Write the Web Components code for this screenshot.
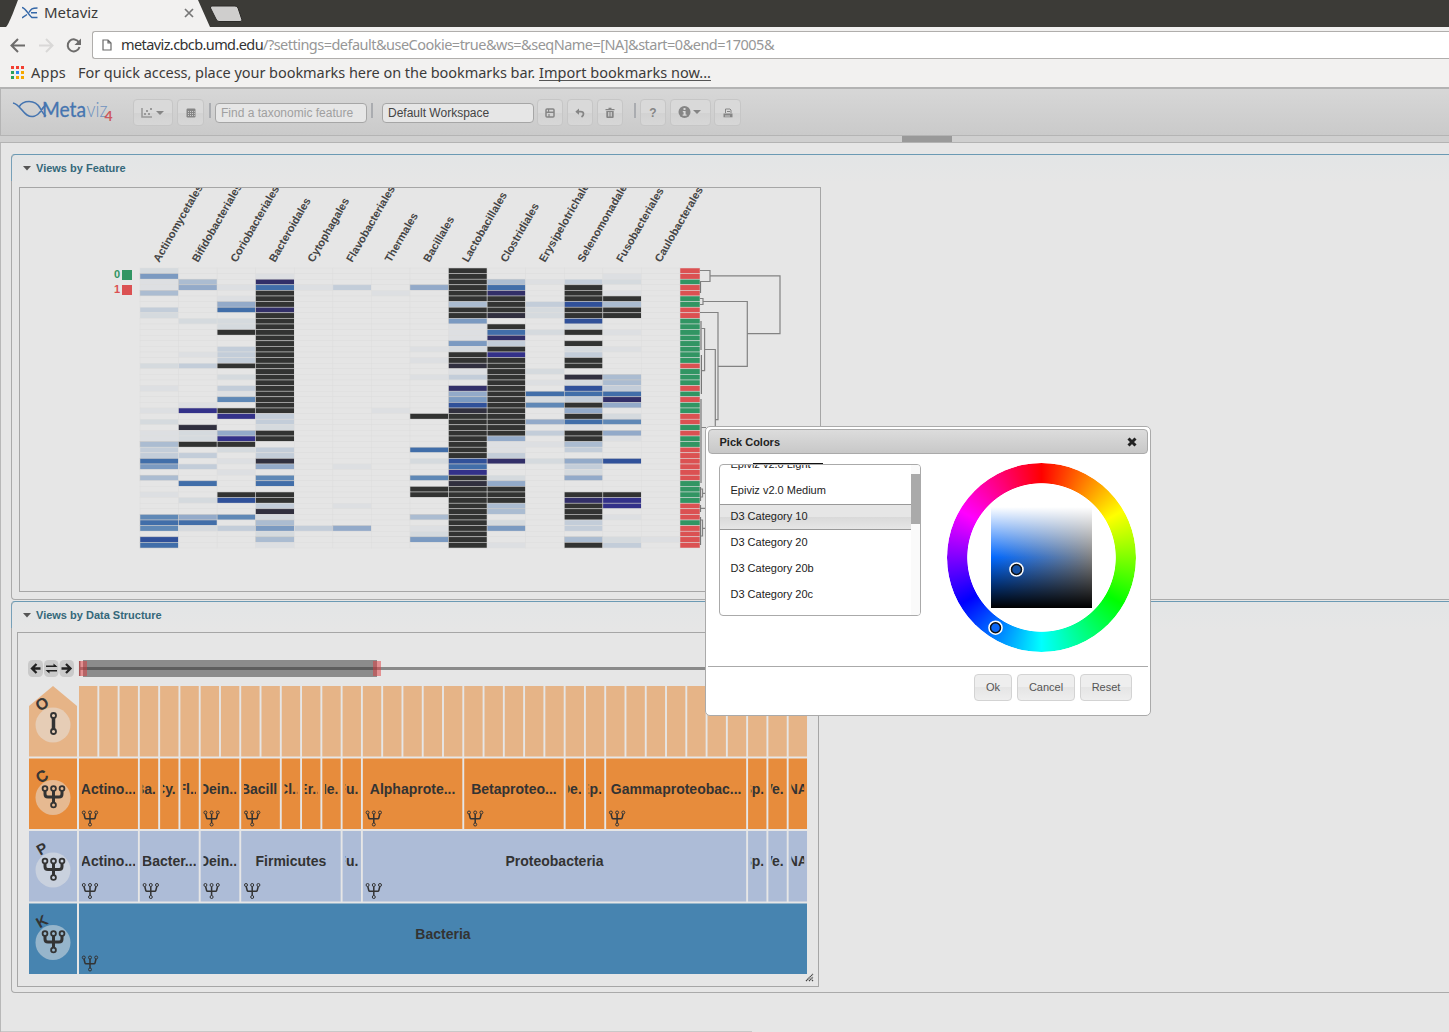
<!DOCTYPE html>
<html lang="en">
<head>
<meta charset="utf-8">
<title>Metaviz</title>
<style>
html,body{margin:0;height:100%}
body{font-family:"Liberation Sans",Arial,sans-serif;background:#e6e6e6;overflow:hidden;width:1449px;height:1032px}
</style>
</head>
<body>
<mv-page></mv-page>
<script>
const define=(name,html,ready)=>customElements.define(name,class extends HTMLElement{
  connectedCallback(){
    if(this.shadowRoot)return;
    const t=document.createElement('template');
    t.innerHTML=typeof html==='function'?html(this):html;
    this.attachShadow({mode:'open'}).append(t.content.cloneNode(true));
    if(ready)ready(this);
  }
});

/* Line of text stretched to a given advance width */
define('mv-fit','<style>:host{display:inline-block;white-space:pre}span{display:inline-block}</style><span><slot></slot></span>',el=>{
  const s=el.shadowRoot.querySelector('span'),n=el.textContent.length,w=+el.getAttribute('w');
  s.style.letterSpacing=((w-s.getBoundingClientRect().width)/n)+'px';
});

define('mv-browser',`<style>
:host{display:block;height:87px;background:#f2f1f0;font:15px "Noto Sans","Open Sans",sans-serif;color:#3c3b3a}
.tabs{height:27px;background:#3c3b37;position:relative}
.tabs>svg{display:block;position:absolute;left:0;top:0}
.tabrow{position:relative;display:flex;align-items:center;height:26px;padding-left:22px}
.tabrow .name{margin-left:6px;width:140px;padding-bottom:2px}
.nav{display:flex;align-items:center;height:35px}
.nav svg{flex:none}
.url{margin-left:10px;flex:1;height:26px;border:1px solid #b0aeac;border-right:0;border-radius:3px 0 0 3px;background:#fff;display:flex;align-items:center;font-size:14.5px;color:#333}
.url svg{margin:0 9px 0 9px}
.url mv-fit{margin-bottom:2px}
.url i{font-style:normal;color:#979797}
.marks{display:flex;align-items:center;height:21px;padding-left:11px;font-size:14.5px}
.marks svg{margin-right:7px}
.marks mv-fit{margin-bottom:2px}
.marks .m{margin-left:12px}
u{text-decoration:none;border-bottom:1px solid #555;line-height:16px;margin-left:4px;display:inline-block}
.marks u mv-fit{margin-bottom:0}
</style>
<div class="tabs"><svg width="260" height="27"><path d="M6 27C9 25 16 5 18 0H198L210 27Z" fill="#f2f1f0"/><path d="M212 6H235Q237 6 238 8L242 20Q242 21.500 240 21.500H219Q217 21.500 216 19L210.500 8Q210 6 212 6Z" fill="#cfcecd" stroke="#2c2b28"/></svg>
<div class="tabrow"><svg width="16" height="14" fill="none" stroke="#3568a8" stroke-width="1.500"><path d="M0 1.500C4 2 7 10 10 11.500H15.500M0 12L5 8.500M7 6.500C9 3 10 2 15.500 2M9 6.700H15"/></svg><span class="name"><mv-fit w="54">Metaviz</mv-fit></span><svg width="10" height="10" stroke="#777" stroke-width="1.700"><path d="M1 1L9 9M9 1L1 9"/></svg></div></div>
<div class="nav"><svg width="82" height="34" fill="none" stroke="#6d6c6b" stroke-width="2"><path d="M25 17.500H12M18 11L11.500 17.500L18 24"/><path stroke="#d9d8d7" d="M39 17.500H52M46 11L52.500 17.500L46 24"/><path d="M79 14.500A6 6 0 1 0 79.500 19"/><path fill="#6d6c6b" stroke="none" d="M81 10.500V17H74.500Z"/></svg>
<div class="url"><svg width="10" height="12" fill="none" stroke="#6a6a6a" stroke-width="1.200"><path d="M1 1H6L9 4V11H1ZM6 1V4H9"/></svg><mv-fit w="142">metaviz.cbcb.umd.edu</mv-fit><i><mv-fit w="511">/?settings=default&amp;useCookie=true&amp;ws=&amp;seqName=[NA]&amp;start=0&amp;end=17005&amp;</mv-fit></i></div></div>
<div class="marks"><svg width="13" height="13"><g fill="#f33f30"><path d="M0 0h3v3H0zM5 0h3v3H5zM10 0h3v3h-3z"/></g><path fill="#2ca05a" d="M0 5h3v3H0zM0 10h3v3H0z"/><path fill="#2a86f0" d="M5 5h3v3H5z"/><path fill="#f5a800" d="M10 5h3v3h-3zM5 10h3v3H5zM10 10h3v3h-3z"/></svg><mv-fit w="35">Apps</mv-fit><span class="m"><mv-fit w="457">For quick access, place your bookmarks here on the bookmarks bar.</mv-fit></span><u><mv-fit w="172">Import bookmarks now...</mv-fit></u></div>`);

define('mv-button',`<style>
:host{display:flex;align-items:center;justify-content:center;box-sizing:border-box;height:27px;border:1px solid #c6c6c6;border-radius:4px;background:linear-gradient(#d9d9d9 50%,#d2d2d2 50%,#d7d7d7);color:#858585;font:bold 12px "Liberation Sans",sans-serif;flex:none}
:host([light]){height:27px;font:11px "Liberation Sans",sans-serif;color:#555;border-color:#d3d3d3;background:linear-gradient(#eeeeee 50%,#e5e5e5 50%,#eeeeee);padding-bottom:2px}
</style><slot></slot>`);

define('mv-toolbar',`<style>
:host{display:block;font:12px "Liberation Sans",sans-serif}
.bar{box-sizing:border-box;height:49px;border-top:2px solid #b3b3b3;border-bottom:1px solid #b4b4b4;border-left:1px solid #b4b4b4;background:linear-gradient(#d7d7d7,#cacaca);display:flex;align-items:flex-start;padding:10px 0 0 11px}
.logo{width:110px;height:30px;margin-right:11px;flex:none;font-family:Lato,sans-serif}
.sep{width:2px;height:15px;background:#aaacb0;margin:4px 0 0 -1px;flex:none}
.in{box-sizing:border-box;width:152px;height:20px;border:1px solid #a6a6a6;border-radius:4px;background:#e6e6e6;padding:0 5px;line-height:18px;margin-top:4px;flex:none;color:#444;white-space:nowrap}
.ph{color:#a0a0a0}
.strip{box-sizing:border-box;height:7px;background:#cfcfcf;border-bottom:1px solid #b3b3b3;display:flex;padding-left:902px}
.strip b{width:50px;height:6px;background:#999}
</style>
<div class="bar">
<svg class="logo" width="110" height="30"><g fill="none" stroke="#4675b0" stroke-width="1.600"><path d="M1 4C7 5 10 13 15 16C20 19 25 17 28 13Q31 8 34 6M7 8C11 1 23 0 28 9Q31 15 34 17"/></g><text x="30" y="17.500" font-size="21" fill="#4675b0" stroke="#4675b0" stroke-width=".3" textLength="44" lengthAdjust="spacingAndGlyphs">Meta</text><text x="74.500" y="17.500" font-size="21" font-weight="300" fill="#6f93c0" textLength="21" lengthAdjust="spacingAndGlyphs">viz</text><text x="92.500" y="22" font-size="14" font-weight="bold" fill="#cc5a60">4</text></svg>
<mv-button style="width:40px"><svg width="24" height="12"><path d="M1 1V10H11" fill="none" stroke="#999" stroke-width="1.600"/><path fill="#999" d="M3 6h2v2H3zM5 3h2v2H5zM7 6h2v2H7zM9 1h2v2H9z"/><path fill="#858585" d="M15 4H23L19 8Z"/></svg></mv-button>
<mv-button style="width:27px;margin-left:4px"><svg width="10" height="10"><rect x=".5" y=".5" width="9" height="9" rx="1.200" fill="#858585"/><path fill="#cdcdcd" d="M2 3h1v1H2zM4 3h1v1H4zM6 3h1v1H6zM8 3h.7v1H8zM2 5h1v1H2zM4 5h1v1H4zM6 5h1v1H6zM8 5h.7v1H8zM2 7h1v1H2zM4 7h1v1H4zM6 7h1v1H6zM8 7h.7v1H8z"/></svg></mv-button>
<span class="sep" style="margin-left:5px"></span><div class="in ph" style="margin-left:4px">Find a taxonomic feature</div>
<span class="sep" style="margin-left:4px"></span><div class="in" style="margin-left:9px">Default Workspace</div>
<mv-button style="width:26px;margin-left:3px"><svg width="10" height="10"><rect x="1" y="1" width="8" height="8" rx="1" fill="none" stroke="#858585" stroke-width="1.500"/><path fill="#858585" d="M1 3.500H9V5H1zM3 1h1.200v3H3zM3.400 6h1.200v3H3.400z"/></svg></mv-button>
<mv-button style="width:26px;margin-left:4px"><svg width="10" height="10"><path fill="none" stroke="#858585" stroke-width="1.700" d="M3 3.700H5.500Q8.500 3.700 8.500 6Q8.500 7.500 6.500 9"/><path fill="#858585" d="M.3 3.700L4 .6V6.800Z"/></svg></mv-button>
<mv-button style="width:26px;margin-left:4px"><svg width="10" height="11"><path fill="#858585" d="M.5 2h9v1.200h-9zM3.500 .8h3V2h-3zM1.300 4h7.400v6q0 1-1 1H2.300q-1 0-1-1z"/><path stroke="#ccc" stroke-width=".9" d="M3.500 5V9.500M5 5V9.500M6.500 5V9.500"/></svg></mv-button>
<span class="sep" style="margin-left:11px"></span>
<mv-button style="width:26px;margin-left:4px">?</mv-button>
<mv-button style="width:41px;margin-left:4px"><svg width="24" height="13" style="margin-left:-1px"><circle cx="6.500" cy="6" r="6" fill="#858585"/><path fill="#d8d8d8" d="M5.500 2h2v2h-2zM4.800 5h2.800V8.500h1v1.200H4.600V8.500h1V6.200h-.8z"/><path fill="#858585" d="M15 4H23L19 8Z"/></svg></mv-button>
<mv-button style="width:27px;margin-left:3px"><svg width="10" height="10"><path fill="none" stroke="#858585" d="M2.500 5V1H7L8 2V5M4 3.500H7"/><path fill="#858585" d="M.5 5.500h9V9.300h-9z"/><path fill="#ccc" d="M2 7.500h5v1H2z"/></svg></mv-button>
</div><div class="strip"><b></b></div>`);

define('mv-panel',el=>`<style>
:host{display:block;box-sizing:border-box;border:1px solid #aaa;border-top-color:#6b9ab4;border-right:0;border-radius:4px 0 0 4px;background:linear-gradient(#e3e5e6,#e6e6e6 28px);background-size:100% 28px;background-repeat:no-repeat}
h3{margin:0 0 0 -1px;border-left:1px solid #77a0b8;height:26px;display:flex;align-items:center;font:bold 11px "Liberation Sans",sans-serif;color:#34687a;padding-left:10.5px;border-top-left-radius:4px}
svg{margin-right:5.500px}
</style><h3><svg width="8" height="5"><path d="M0 0H8L4 4.500Z" fill="#555"/></svg>${el.getAttribute('label')}</h3><slot></slot>`);

const COLORS={a:'#dddfe2',b:'#d5dade',c:'#c3cdd9',d:'#abbcd1',e:'#93aac9',f:'#7b9ac1',g:'#5f88b6',h:'#416ea9',i:'#30519a',j:'#333189',k:'#322f68',l:'#31303f',m:'#323332'};
const ROWS='0b8m,0f3a8mCa,0a1d3k8m9dAaBcCb,0a1e2a3h4a5c7e8m9hBm,0d3m6a8m9kBmCa,2a3m8m9mBmCm,2e3m8d9mAcBiCd,0c2h3k8m9mAbBmCm,0b3m8m9lAbBmCm,1b2b3m8fBi,2b3m8a9mBb,2m3m8a9hAbBmCa,3m8a9k,3m8f9cBm,2c3m7a8b9mBbCa,1a2c3m8m9jBc,2c3m7a8m9mBm,0b1c2m3m8l9mBm,3m8a9mAb,2b3m7a8c9mBlCd,3m9mAaBbCd,0a2c3m8k9mBiCc,2a3m8e9mAhBhCh,2g3m8f9mAbBcCk,1a3m8i9mAgBmCe,0a1j2m3m6a8l9mBe,2j3c7m8m9mBmCb,0b3c8m9mAeBhCg,1l3b8m9mBa,0a1b2e3m8m9mAcBmCe,0a1b2j3m8m9eBmCa,0d1m2m8m9aAaBd,0c2b3c7h8m9aBc,0c1c3c8m9c,0h2a3l7b8i9kAbBeCi,0f1c3e5a8hBc,2a8jBb,0d3g7g8m9bBe,1h3h8l9e,7m8m9m,0a2m3m7m8m9mBmCm,1b2i3m8m9mBkCj,3c5a8m9dBmCj,3l8m9dBm,0g1e2g3b7d8mBmCa,0h1h3d8m9bBc,0g1b2c3f4c5e7a8m9fBc,3b7b8m,0i3d7f8mBdCbDa,0h3a8m9aBmCc'.split(',');
const CLASS='RRGRRGGRRGGGGGGGGRGGGRGRGGRRGRGGRRRRRRGGGGRRRGRRRR';
const TAXA=['Actinomycetales','Bifidobacteriales','Coriobacteriales','Bacteroidales','Cytophagales','Flavobacteriales','Thermales','Bacillales','Lactobacillales','Clostridiales','Erysipelotrichales','Selenomonadales','Fusobacteriales','Caulobacterales'];

/* Heatmap with row classes and dendrogram; coordinates in page space via viewBox */
define('mv-heatmap',()=>{
  let s='';const W=540/14,H=5.6,X=140,Y=268;
  ROWS.forEach((r,i)=>{
    const m={};for(let k=0;k<r.length;k+=2)m[parseInt(r[k],16)]=r[k+1];
    for(let c=0;c<14;c++)s+=`<rect x="${(X+c*W).toFixed(2)}" y="${(Y+i*H).toFixed(2)}" width="${W.toFixed(2)}" height="5.6" fill="${COLORS[m[c]]||'#e5e5e5'}" stroke="${m[c]>'c'?'#c8c8c8':'#dedede'}" stroke-width=".55"/>`;
    s+=`<rect x="680" y="${(Y+i*H).toFixed(2)}" width="20" height="5.6" fill="${CLASS[i]=='R'?'#db5152':'#319563'}" stroke="#ddd" stroke-width=".5"/>`;
  });
  TAXA.forEach((t,i)=>{s+=`<text transform="translate(${(159.3+i*W).toFixed(1)} 263) rotate(-60)" font-size="11" font-weight="bold" fill="#444">${t}</text>`});
  return `<style>:host{display:block;box-sizing:border-box;width:802px;height:405px;border:1px solid #a6a6a6}svg{display:block;overflow:hidden}</style>
<svg width="800" height="403" viewBox="20 188 800 403" font-family="Liberation Sans,sans-serif">${s}
<g font-size="11" font-weight="bold"><text x="114" y="278" fill="#319563">0</text><text x="114" y="293" fill="#db5152">1</text></g><rect x="122" y="270" width="10" height="10" fill="#319563"/><rect x="122" y="285" width="10" height="10" fill="#db5152"/>
<path fill="none" stroke="#828282" stroke-width="1.200" d="M700 270.500H710V281.500H700M710 275.900H780V333.700H747.500M700 298.500H703V304.500H700M703 301.500H747.300V366.300H718M700 312.500H718V419.700H715.300M715.300 450V349.500H704.600M701.500 328.500H704.600V370.700H701.500M701.500 427.500H706M700 489H702.500V497H700M702.500 493.300H706M701 508.300H706M700 520H702.500V536H700M702.500 528.300H706"/>
<path fill="none" stroke="#777" stroke-width="1.200" d="M700.500 282V293M701 321V350M701.400 355V394M701 399V483M700.500 487V501M700.500 505V512M700.500 517V545"/></svg>`;
});

const fork=(x,y,big)=>big
 ?`<g transform="translate(${x} ${y})" fill="none" stroke="#333"><path stroke-width="3" d="M-8.500 2.500V5.500Q-8.500 8.500-5.500 8.500H5.500Q8.500 8.500 8.500 5.500V2.500M0 2.500V14"/><g stroke-width="1.800"><circle cx="-8.500" r="2.400"/><circle r="2.400"/><circle cx="8.500" r="2.400"/><circle cy="16.500" r="2.400"/></g></g>`
 :`<g transform="translate(${x} ${y})" fill="none" stroke="#333"><path stroke-width="1.500" d="M-6 1.500L-5 5.500Q-4.800 6.300-4 6.300H4Q4.800 6.300 5 5.500L6 1.500M0 1.500V10.500"/><g stroke-width="1"><circle cx="-6.200" r="1.500"/><circle r="1.500"/><circle cx="6.200" r="1.500"/><circle cy="12" r="1.500"/></g></g>`;
define('mv-icicle',()=>{
  const U=729.9/36,X=79;let s='',id=0;
  const rows=[
   {y:686,c:'#e6b487',k:'O',cells:Array(36).fill(['',1])},
   {y:758.5,c:'#e78c3c',k:'C',cells:[['Actino...',3,1],['Ba...',1],['Cy...',1],['Fl...',1],['Dein...',2,1],['Bacilli',2,1],['Cl...',1],['Er...',1],['Ne...',1],['Fu...',1],['Alphaprote...',5,1],['Betaproteo...',5,1],['De...',1],['Ep...',1],['Gammaproteobac...',7,1],['Sp...',1],['Ve...',1],['NA',1]]},
   {y:831,c:'#adbcd7',k:'P',cells:[['Actino...',3,1],['Bacter...',3,1],['Dein...',2,1],['Firmicutes',5,1],['Fu...',1],['Proteobacteria',19,1],['Sp...',1],['Ve...',1],['NA',1]]},
   {y:903.5,c:'#4784b0',k:'K',cells:[['Bacteria',36,1]]}];
  rows.forEach((r,ri)=>{
    s+=ri?`<rect x="29" y="${r.y}" width="48" height="70.500" fill="${r.c}"/>`:`<path d="M29 706L53 686L77 706V756.500H29Z" fill="${r.c}"/>`;
    s+=`<text transform="translate(${42} ${r.y+18}) rotate(-30)" text-anchor="middle" y="5" font-size="15" font-weight="${ri<2?'normal':'bold'}" stroke="#333" stroke-width="${ri<2?.8:0}" fill="#333">${r.k}</text><circle cx="53" cy="${r.y+39}" r="17.500" fill="#e6e6e6" opacity=".5"/>`;
    s+=ri?fork(53.5,r.y+30,true):`<g fill="none" stroke="#333"><path stroke-width="3.500" d="M53.500 717V730"/><circle cx="53.500" cy="715.500" r="2.500" stroke-width="1.800"/><circle cx="53.500" cy="731.500" r="2.500" stroke-width="1.800"/></g>`;
    let u=0;
    r.cells.forEach(([t,n,f])=>{
      const x=X+u*U,w=n*U-1.900;u+=n;
      s+=`<rect x="${x.toFixed(2)}" y="${r.y}" width="${w.toFixed(2)}" height="70.500" fill="${r.c}"/>`;
      if(t){id++;s+=`<clipPath id="c${id}"><rect x="${(x+2.8).toFixed(2)}" y="${r.y}" width="${(w-5.600).toFixed(2)}" height="70"/></clipPath><g clip-path="url(#c${id})"><text x="${(x+w/2).toFixed(2)}" y="${r.y+35.3}" text-anchor="middle" font-size="14" font-weight="bold" fill="#333">${t}</text></g>`}
      if(f)s+=fork(+(x+11).toFixed(1),r.y+54,false);
    });
  });
  return `<style>:host{display:block;box-sizing:border-box;width:802px;height:355px;border:1px solid #a6a6a6}svg{display:block}</style>
<svg width="800" height="353" viewBox="18 633 800 353" font-family="Liberation Sans,sans-serif">
<g fill="#cacaca"><rect x="28" y="660" width="15" height="17" rx="4.500"/><rect x="44" y="660" width="14.500" height="17" rx="4.500"/><rect x="59.500" y="660" width="14.500" height="17" rx="4.500"/></g>
<g fill="none" stroke="#222" stroke-width="2.300"><path d="M40.500 668.500H33M36.500 664L32 668.500L36.500 673M61.500 668.500H69M66 664L70.500 668.500L66 673"/><path stroke-width="1.500" d="M46 666.300H56M47 670.700H57"/></g><path fill="#222" d="M53.500 663.500L57.500 667H53.500ZM49.500 673.500L45.500 670H49.500Z"/>
<rect x="79" y="667" width="728" height="3" fill="#8a8a8a"/><rect x="83" y="660" width="294" height="17" fill="#8c8c8c"/><rect x="83" y="667" width="294" height="3" fill="#5e5e5e"/>
<g fill="#e03a3e" fill-opacity=".5"><rect x="79" y="661" width="8" height="15"/><rect x="373" y="661" width="8" height="15"/></g><path d="M79.700 661V676" stroke="#a55" stroke-width="1.500"/>
${s}<path stroke="#444" stroke-width="1.200" stroke-dasharray="1.400 .4" d="M806 981L813 974M809 981L813 977M812 981L813 980"/></svg>`;
});

define('mv-list',`<style>
:host{display:flex;box-sizing:border-box;width:202px;height:152px;border:1px solid #aaa;border-radius:4px;overflow:hidden;font:11px "Liberation Sans",sans-serif;color:#222}
.items{flex:1;margin-top:-13px}
.items div{box-sizing:border-box;height:26px;padding-left:10.5px;line-height:24px;border:solid transparent;border-width:0}
.items .sel{border:solid #999;border-width:1px 0;line-height:22px;background:linear-gradient(#e6e6e6 50%,#d9d9d9 50%,#e6e6e6)}
.track{width:9px;background:#fafafa;padding-top:9px}
.track i{display:block;height:50px;background:#aaa}
</style><div class="items"><div>Epiviz v2.0 Light</div><div>Epiviz v2.0 Medium</div><div class="sel">D3 Category 10</div><div>D3 Category 20</div><div>D3 Category 20b</div><div>D3 Category 20c</div></div><div class="track"><i></i></div>`);

define('mv-wheel',`<style>
:host{display:grid;place-items:center;width:189px;height:189px;position:relative}
.ring,.sq{grid-area:1/1}
.ring{width:189px;height:189px;border-radius:50%;background:conic-gradient(red,#ff0,#0f0,#0ff,#00f,#f0f,red);-webkit-mask:radial-gradient(closest-side,transparent 78.200%,#000 79%);mask:radial-gradient(closest-side,transparent 78.200%,#000 79%)}
.sq{width:101px;height:101px;background:linear-gradient(#fff,rgba(255,255,255,0) 50%,rgba(0,0,0,0) 50%,#000),linear-gradient(to right,#0068ff,#808080)}
svg{position:absolute;inset:0}
</style><div class="ring"></div><div class="sq"></div><svg width="189" height="189"><g fill="none" stroke="#fff" stroke-width="2"><circle cx="69.500" cy="106.500" r="6.300"/><circle cx="48.500" cy="164.700" r="6.300"/></g><g stroke="#111" stroke-width="1.500"><circle cx="69.500" cy="106.500" r="5" fill="#1552a8"/><circle cx="48.500" cy="164.700" r="5" fill="#0a66f5"/></g></svg>`);

define('mv-dialog',`<style>
:host{display:block;position:absolute;left:705px;top:426px;width:446px;height:290px;box-sizing:border-box;border:1px solid #aaa;border-radius:5px;background:#fff;padding:2px;font:11px "Liberation Sans",sans-serif}
header{box-sizing:border-box;height:25px;border:1px solid #aaa;border-radius:4px;background:linear-gradient(#dcdcdc,#c8c8c8);display:flex;align-items:center;justify-content:space-between;padding:0 10px 0 10.5px;font-weight:bold;color:#222}
main{display:flex;height:213px;box-sizing:border-box;border-bottom:1px solid #aaa;padding:10px 0 0 11px;position:relative}
main::before{content:"";position:absolute;left:45px;top:9px;width:70px;height:1px;background:#111}
mv-wheel{margin:-1px 0 0 26px}
footer{display:flex;justify-content:flex-end;gap:5px;padding:7px 16px 0 0}
</style><header><span>Pick Colors</span><svg width="10" height="10"><path d="M1.500 1.500L8.500 8.500M8.500 1.500L1.500 8.500" stroke="#222" stroke-width="3"/></svg></header>
<main><mv-list></mv-list><mv-wheel></mv-wheel></main>
<footer><mv-button light style="width:38px">Ok</mv-button><mv-button light style="width:58px">Cancel</mv-button><mv-button light style="width:52px">Reset</mv-button></footer>`);

define('mv-page',`<style>
:host{display:block;width:1449px;height:1032px;overflow:hidden;position:relative}
.body{box-sizing:border-box;height:889px;border-left:1px solid #b8b8b8;background:#e6e6e6;padding:11px 0 0 10px;display:flex;flex-direction:column}
.one{height:446px;flex:none}.two{height:392px;flex:none;margin-top:1px}
.end{margin:auto 0 0 -10px;width:751px;height:1px;background:#c8c8c8}
mv-heatmap{margin:6px 0 0 7px}mv-icicle{margin:4px 0 0 5px}
</style><mv-browser></mv-browser><mv-toolbar></mv-toolbar>
<div class="body"><mv-panel class="one" label="Views by Feature"><mv-heatmap></mv-heatmap></mv-panel><mv-panel class="two" label="Views by Data Structure"><mv-icicle></mv-icicle></mv-panel><div class="end"></div></div>
<mv-dialog></mv-dialog>`);
</script>
</body>
</html>
